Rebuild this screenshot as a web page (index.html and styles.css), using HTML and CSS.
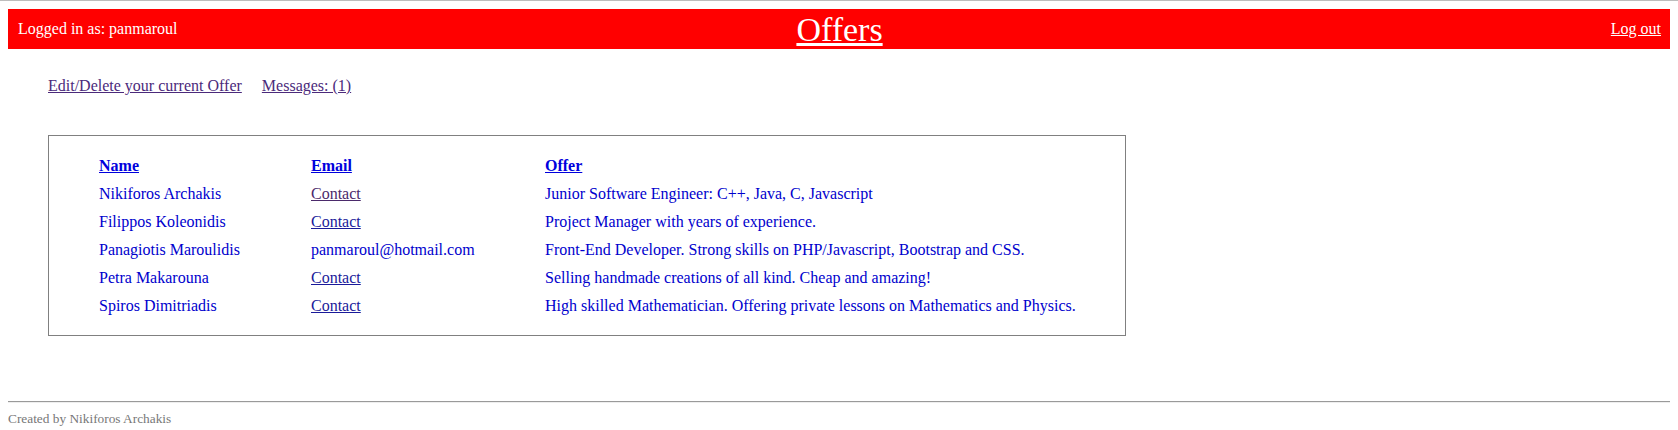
FILE: index.html
```html
<!DOCTYPE html>
<html lang="en">
<head>
<meta charset="utf-8">
<title>Offers</title>
<link rel="stylesheet" href="styles.css">
</head>
<body>
<header class="topbar">
  <div class="user">Logged in as: panmaroul</div>
  <a class="title" href="#">Offers</a>
  <a class="logout" href="#">Log out</a>
</header>

<nav class="menu">
  <a class="visited" href="#">Edit/Delete your current Offer</a>
  <a class="visited" href="#">Messages: (1)</a>
</nav>

<div class="box">
  <table class="offers">
    <thead>
      <tr>
        <th class="c-name"><a href="#">Name</a></th>
        <th class="c-email"><a href="#">Email</a></th>
        <th class="c-offer"><a href="#">Offer</a></th>
      </tr>
    </thead>
    <tbody>
      <tr>
        <td>Nikiforos Archakis</td>
        <td><a class="visited" href="#">Contact</a></td>
        <td>Junior Software Engineer: C++, Java, C, Javascript</td>
      </tr>
      <tr>
        <td>Filippos Koleonidis</td>
        <td><a href="#">Contact</a></td>
        <td>Project Manager with years of experience.</td>
      </tr>
      <tr>
        <td>Panagiotis Maroulidis</td>
        <td>panmaroul@hotmail.com</td>
        <td>Front-End Developer. Strong skills on PHP/Javascript, Bootstrap and CSS.</td>
      </tr>
      <tr>
        <td>Petra Makarouna</td>
        <td><a href="#">Contact</a></td>
        <td>Selling handmade creations of all kind. Cheap and amazing!</td>
      </tr>
      <tr>
        <td>Spiros Dimitriadis</td>
        <td><a href="#">Contact</a></td>
        <td>High skilled Mathematician. Offering private lessons on Mathematics and Physics.</td>
      </tr>
    </tbody>
  </table>
</div>

<footer class="footer">
  <hr class="rule">
  <p class="credit">Created by Nikiforos Archakis</p>
</footer>
</body>
</html>
```

FILE: styles.css
```css
html {
  border-top: 1px solid #bdbdbd;
}

body {
  margin: 8px;
  font-family: "Liberation Serif", "Times New Roman", serif;
  font-size: 16px;
  color: #000;
  background: #fff;
}

.topbar {
  display: flex;
  align-items: center;
  justify-content: space-between;
  height: 40px;
  padding: 0 9px 0 10px;
  background: #ff0000;
  color: #fff;
}

.topbar a {
  color: #fff;
}

.user,
.logout {
  flex: 1 1 0;
}

.logout {
  text-align: right;
}

.title {
  font-size: 34px;
  line-height: 40px;
  padding-top: 2px;
}

.menu {
  display: flex;
  gap: 20px;
  margin: 28px 0 0 40px;
  line-height: 18px;
}

.menu a {
  color: #4b2a7b;
}

.box {
  width: 1026px;
  margin: 40px 0 0 40px;
  padding: 16px 0 15px 50px;
  border: 1px solid #808080;
}

.offers {
  border-collapse: collapse;
  color: #0000cd;
}

.offers th,
.offers td {
  height: 28px;
  padding: 0;
  text-align: left;
  vertical-align: middle;
  white-space: nowrap;
}

.offers th a {
  color: #0000dd;
  font-weight: bold;
}

.offers td a {
  color: #1a1a9a;
}

.offers a.visited {
  color: #4b2a6b;
}

.c-name {
  width: 212px;
}

.c-email {
  width: 234px;
}

.footer {
  margin-top: 65px;
}

.rule {
  margin: 0;
  border: 0;
  border-top: 1px solid #9a9a9a;
  border-bottom: 1px solid #eeeeee;
}

.credit {
  margin: 8px 0 0;
  font-size: 13.33px;
  color: #777777;
}
```
